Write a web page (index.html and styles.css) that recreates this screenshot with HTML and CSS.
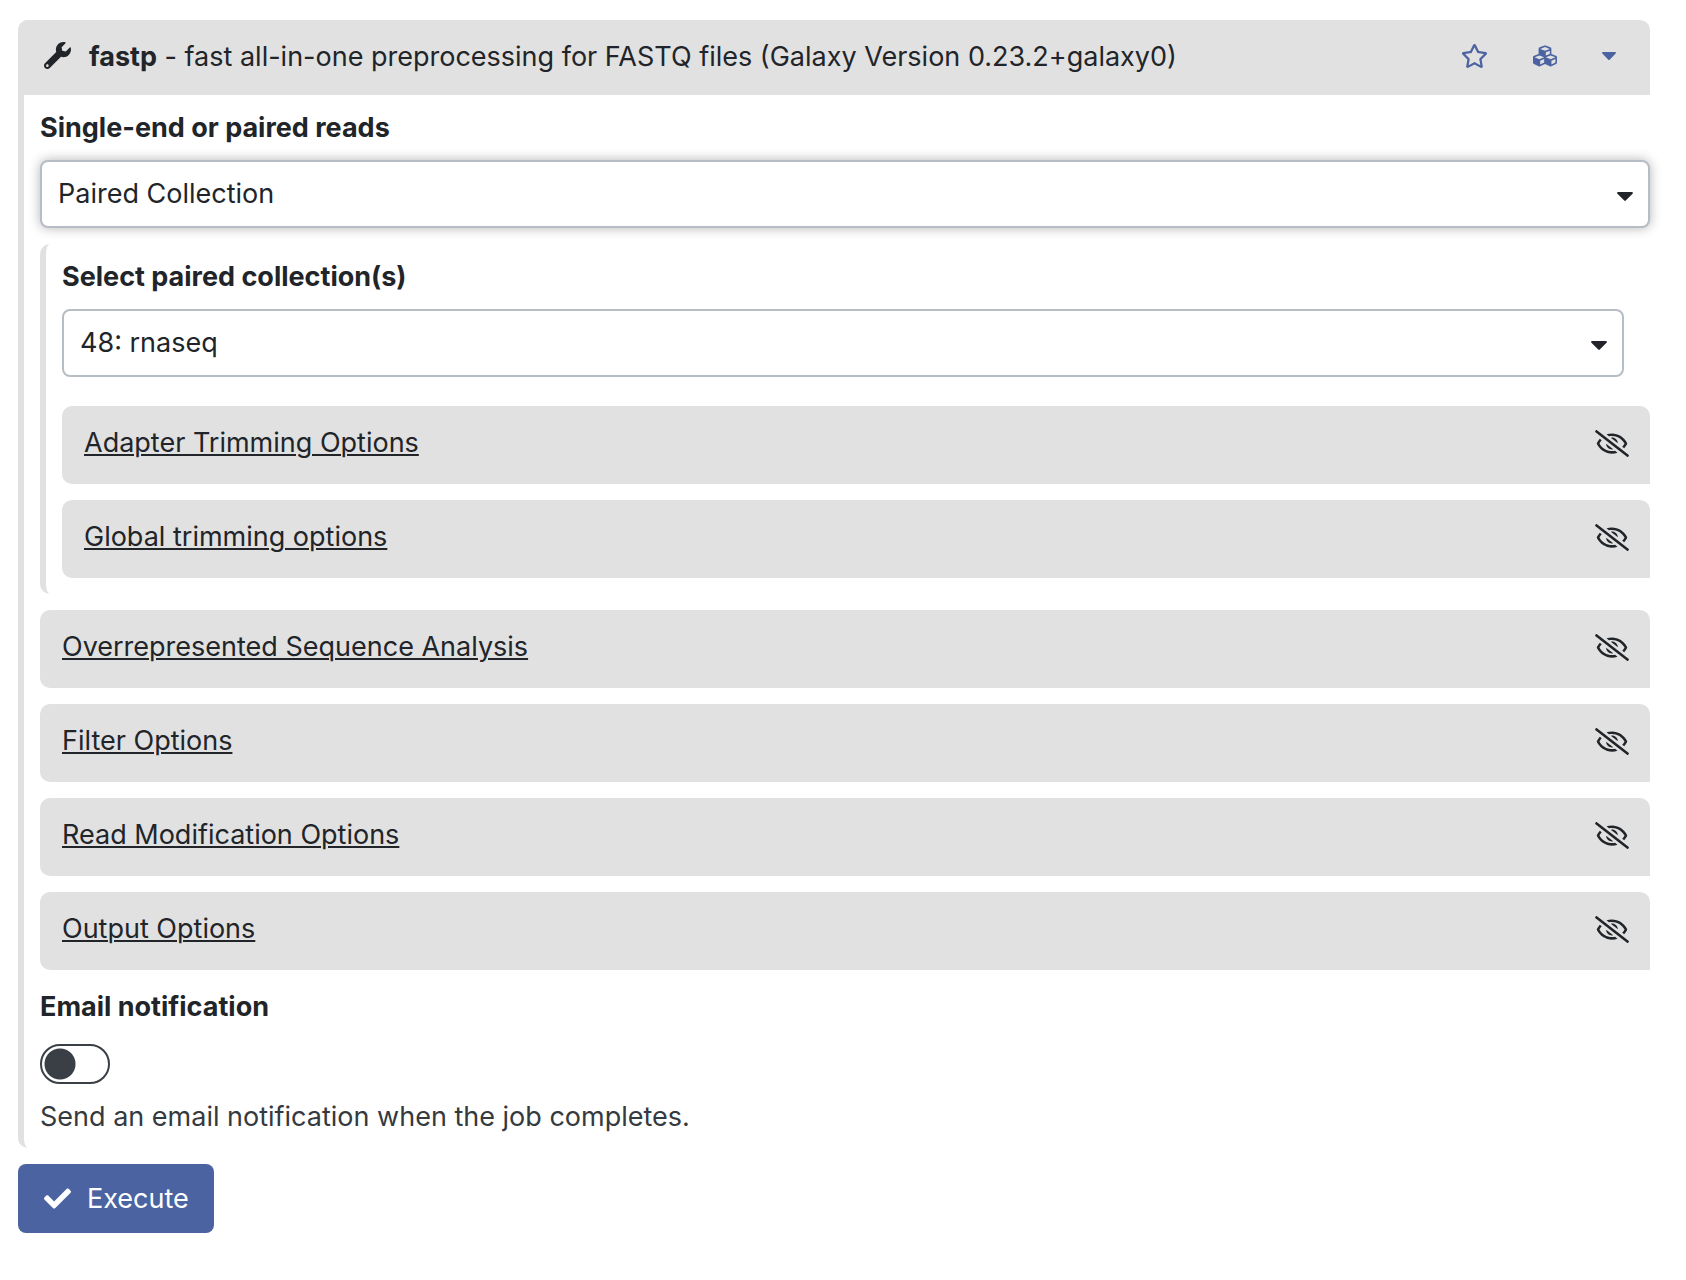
FILE: index.html
```html
<!DOCTYPE html>
<html lang="en">
<head>
<meta charset="utf-8">
<meta name="viewport" content="width=device-width, initial-scale=1">
<title>fastp</title>
<link rel="stylesheet" href="styles.css">
</head>
<body>
<svg class="sprite" aria-hidden="true">
  <symbol id="eye-slash" viewBox="0 0 640 512"><path d="M634 471L36 3.51A16 16 0 0 0 13.51 6l-10 12.49A16 16 0 0 0 6 41l598 467.49a16 16 0 0 0 22.49-2.49l10-12.49A16 16 0 0 0 634 471zM296.79 146.47l134.79 105.38C429.36 191.91 380.48 144 320 144a112.26 112.26 0 0 0-23.21 2.47zm46.42 219.07L208.42 260.16C210.65 320.09 259.53 368 320 368a113 113 0 0 0 23.21-2.46zM320 112c98.65 0 189.09 55 237.93 144a285.53 285.53 0 0 1-44 60.2l37.74 29.5a333.7 333.7 0 0 0 52.9-75.11 32.35 32.35 0 0 0 0-29.19C550.29 135.59 442.93 64 320 64c-36.7 0-71.71 7-104.63 18.81l46.41 36.29c18.94-4.3 38.34-7.1 58.22-7.1zm0 288c-98.65 0-189.08-55-237.93-144a285.47 285.47 0 0 1 44.05-60.19l-37.74-29.5a333.6 333.6 0 0 0-52.89 75.1 32.35 32.35 0 0 0 0 29.19C89.72 376.41 197.08 448 320 448c36.7 0 71.71-7.05 104.63-18.81l-46.41-36.28C359.28 397.2 339.89 400 320 400z"/></symbol>
  <symbol id="caret" viewBox="10 192 300 170"><path d="M31.3 192h257.3c17.8 0 26.7 21.5 14.1 34.1L174.1 354.8c-7.8 7.8-20.5 7.8-28.3 0L17.2 226.1C4.6 213.5 13.5 192 31.3 192z"/></symbol>
</svg>
<form class="tool">
  <section class="card">
    <header class="card-header">
      <svg class="icon-tool" viewBox="0 0 512 512" aria-hidden="true"><path d="M507.73 109.1c-2.24-9.03-13.54-12.09-20.12-5.51l-74.36 74.36-67.88-11.31-11.31-67.88 74.36-74.36c6.62-6.62 3.43-17.9-5.66-20.16-47.38-11.74-99.55.91-136.58 37.93-39.64 39.64-50.55 97.1-34.05 147.2L18.74 402.76c-24.99 24.99-24.99 65.51 0 90.5 24.99 24.99 65.51 24.99 90.5 0l213.21-213.21c50.12 16.71 107.47 5.68 147.37-34.22 37.07-37.07 49.7-89.32 37.91-136.73zM64 472c-13.25 0-24-10.75-24-24 0-13.26 10.75-24 24-24s24 10.74 24 24c0 13.25-10.75 24-24 24z"/></svg>
      <h1 class="title"><b>fastp</b> - fast all-in-one preprocessing for FASTQ files (Galaxy Version 0.23.2+galaxy0)</h1>
      <div class="actions">
        <button type="button" class="icon-button" aria-label="Add to favorites"><svg class="icon-star" viewBox="0 0 576 512"><path d="M528.1 171.5L382 150.2 316.7 17.8c-11.7-23.6-45.6-23.9-57.4 0L194 150.2 47.9 171.5c-26.2 3.8-36.7 36.1-17.7 54.6l105.7 103-25 145.5c-4.5 26.3 23.2 46 46.4 33.7L288 439.6l130.7 68.7c23.2 12.2 50.9-7.4 46.4-33.7l-25-145.5 105.7-103c19-18.5 8.5-50.8-17.7-54.6zM388.6 312.3l23.7 138.4L288 385.4l-124.3 65.3 23.7-138.4-100.6-98 139-20.2 62.2-126 62.2 126 139 20.2-100.6 98z"/></svg></button>
        <button type="button" class="icon-button" aria-label="Versions"><svg class="icon-cubes" viewBox="0 0 512 512"><path d="M488.6 250.2L392 214V105.5c0-15-9.3-28.4-23.4-33.7l-100-37.5c-8.1-3.1-17.1-3.1-25.3 0l-100 37.5c-14.1 5.3-23.4 18.7-23.4 33.7V214l-96.6 36.2C9.3 255.5 0 268.9 0 283.9V394c0 13.6 7.7 26.1 19.9 32.2l100 50c10.1 5.1 22.1 5.1 32.2 0l103.9-52 103.9 52c10.1 5.1 22.1 5.1 32.2 0l100-50c12.2-6.1 19.9-18.6 19.9-32.2V283.9c0-15-9.3-28.4-23.4-33.7zM358 214.8l-85 31.9v-68.2l85-37v73.3zM154 104.1l102-38.2 102 38.2v.6l-102 41.4-102-41.4v-.6zm84 291.1l-85 42.5v-79.1l85-38.8v75.4zm0-112l-102 41.4-102-41.4v-.6l102-38.2 102 38.2v.6zm240 112l-85 42.5v-79.1l85-38.8v75.4zm0-112l-102 41.4-102-41.4v-.6l102-38.2 102 38.2v.6z"/></svg></button>
        <button type="button" class="icon-button" aria-label="Options"><svg class="icon-menu"><use href="#caret"/></svg></button>
      </div>
    </header>
    <div class="card-body">
      <div class="field">
        <label class="label" for="reads">Single-end or paired reads</label>
        <div class="select-wrap">
          <select class="select select-active" id="reads"><option>Paired Collection</option></select>
          <svg class="select-caret" aria-hidden="true"><use href="#caret"/></svg>
        </div>
      </div>
      <div class="nested">
        <div class="field field-inset">
          <label class="label" for="collection">Select paired collection(s)</label>
          <div class="select-wrap">
            <select class="select" id="collection"><option>48: rnaseq</option></select>
            <svg class="select-caret" aria-hidden="true"><use href="#caret"/></svg>
          </div>
        </div>
        <div class="sections">
          <div class="section"><a href="#" class="section-link">Adapter Trimming Options</a><button type="button" class="icon-button dark" aria-label="Expand"><svg class="icon-eye"><use href="#eye-slash"/></svg></button></div>
          <div class="section"><a href="#" class="section-link">Global trimming options</a><button type="button" class="icon-button dark" aria-label="Expand"><svg class="icon-eye"><use href="#eye-slash"/></svg></button></div>
        </div>
      </div>
      <div class="sections">
        <div class="section"><a href="#" class="section-link">Overrepresented Sequence Analysis</a><button type="button" class="icon-button dark" aria-label="Expand"><svg class="icon-eye"><use href="#eye-slash"/></svg></button></div>
        <div class="section"><a href="#" class="section-link">Filter Options</a><button type="button" class="icon-button dark" aria-label="Expand"><svg class="icon-eye"><use href="#eye-slash"/></svg></button></div>
        <div class="section"><a href="#" class="section-link">Read Modification Options</a><button type="button" class="icon-button dark" aria-label="Expand"><svg class="icon-eye"><use href="#eye-slash"/></svg></button></div>
        <div class="section"><a href="#" class="section-link">Output Options</a><button type="button" class="icon-button dark" aria-label="Expand"><svg class="icon-eye"><use href="#eye-slash"/></svg></button></div>
      </div>
      <div class="notify">
        <label class="label" for="email">Email notification</label>
        <input class="switch" type="checkbox" id="email" aria-describedby="email-help">
        <p class="help" id="email-help">Send an email notification when the job completes.</p>
      </div>
    </div>
  </section>
  <button type="submit" class="execute"><svg class="icon-check" viewBox="0 0 512 512" aria-hidden="true"><path d="M173.898 439.404l-166.4-166.4c-9.997-9.997-9.997-26.206 0-36.204l36.203-36.204c9.997-9.998 26.207-9.998 36.204 0L192 312.69 432.095 72.596c9.997-9.997 26.207-9.997 36.204 0l36.203 36.204c9.997 9.997 9.997 26.206 0 36.204l-294.4 294.401c-9.998 9.997-26.207 9.997-36.204-.001z"/></svg>Execute</button>
</form>
</body>
</html>
```
FILE: styles.css
```css
* { box-sizing: border-box; }

body {
  margin: 0;
  background: #fff;
  color: #212529;
  font: 400 27px/40px Inter, "Liberation Sans", sans-serif;
}

svg { display: block; fill: currentColor; }
.sprite { display: none; }

.tool {
  display: flex;
  flex-direction: column;
  align-items: flex-start;
  gap: 16px;
  padding: 20px 36px 46px 18px;
}

.card {
  align-self: stretch;
  border-left: 6px solid #e1e1e1;
  border-radius: 10px;
}

.card-header {
  display: flex;
  align-items: flex-start;
  margin-left: -6px;
  padding: 16px 34px 18px 26px;
  border-radius: 10px 10px 0 0;
  background: #e1e1e1;
}

.icon-tool { width: 27px; height: 27px; margin: 6px 18px 0 0; flex: none; }
.title { flex: 1; margin: 0; padding-top: 1px; font-size: 27px; font-weight: 400; }

.actions {
  display: flex;
  align-items: center;
  gap: 45px;
  height: 40px;
}

.icon-button {
  padding: 0;
  border: 0;
  background: none;
  color: #4b63a1;
  cursor: pointer;
}
.dark { color: #212529; }
.icon-star { width: 27px; height: 24px; }
.icon-cubes { width: 24px; height: 24px; }
.icon-menu { width: 14px; height: 8px; }
.icon-eye { width: 34px; height: 27px; }

.card-body {
  display: flex;
  flex-direction: column;
  gap: 16px;
  padding: 12px 0 11px 16px;
}

.label { display: block; padding-top: 1px; font-weight: 700; }
.field .label { margin-bottom: 12px; }
.field-inset { margin-right: 26px; }

.select-wrap { position: relative; }

.select {
  display: block;
  width: 100%;
  height: 68px;
  padding: 0 48px 0 16px;
  border: 2px solid #b7bdc4;
  border-radius: 8px;
  appearance: none;
  background: #fff;
  color: inherit;
  font: inherit;
}
.select-active { box-shadow: 0 0 12px rgba(0, 0, 0, 0.3); }

.select-caret {
  position: absolute;
  top: 32px;
  right: 17px;
  width: 16px;
  height: 9px;
  pointer-events: none;
}

.nested {
  display: flex;
  flex-direction: column;
  gap: 29px;
  padding: 12px 0 16px 16px;
  border-left: 6px solid #e1e1e1;
  border-radius: 10px;
}

.sections { display: flex; flex-direction: column; gap: 16px; }

.section {
  display: flex;
  align-items: center;
  justify-content: space-between;
  padding: 17px 21px 21px 22px;
  border-radius: 10px 10px 0 10px;
  background: #e1e1e1;
}

.section-link {
  color: inherit;
  text-decoration: underline;
  text-decoration-thickness: 2px;
  text-underline-offset: 2px;
}

.switch {
  display: block;
  width: 70px;
  height: 40px;
  margin: 17px 0 13px;
  border: 2px solid #3a3f46;
  border-radius: 20px;
  appearance: none;
  background: radial-gradient(circle at 18px 18px, #3a3f46 15px, transparent 16px);
}

.help { margin: 0; color: #343a40; }

.execute {
  display: flex;
  align-items: center;
  gap: 16px;
  height: 69px;
  padding: 0 25px 0 26px;
  border: 0;
  border-radius: 8px;
  background: #4b63a1;
  color: #fff;
  font: inherit;
}
.icon-check { width: 27px; height: 27px; }
```
